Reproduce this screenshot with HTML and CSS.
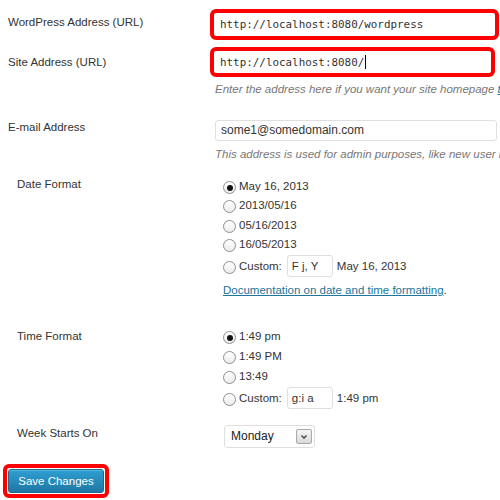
FILE: index.html
```html
<!DOCTYPE html>
<html>
<head>
<meta charset="utf-8">
<link rel="stylesheet" href="styles.css">
</head>
<body>
<div class="form">
  <div class="row row-wp">
    <div class="label label-wp">WordPress Address (URL)</div>
    <div class="field">
      <div class="mark mark-wp"><div class="code">http://localhost:8080/wordpress</div></div>
    </div>
  </div>

  <div class="row row-site">
    <div class="label label-site">Site Address (URL)</div>
    <div class="field">
      <div class="mark mark-site"><div class="code">http://localhost:8080/<span class="caret"></span></div></div>
      <p class="desc desc-site">Enter the address here if you want your site homepage <a class="desc-link">to be different from the directory</a> you installed WordPress.</p>
    </div>
  </div>

  <div class="row row-email">
    <div class="label label-email">E-mail Address</div>
    <div class="field">
      <div class="text-input email">some1@somedomain.com</div>
      <p class="desc desc-email">This address is used for admin purposes, like new user registration.</p>
    </div>
  </div>

  <div class="row row-date">
    <div class="label label-sub label-date">Date Format</div>
    <div class="field">
      <div class="options">
        <label class="opt"><span class="radio checked"></span>May 16, 2013</label>
        <label class="opt"><span class="radio"></span>2013/05/16</label>
        <label class="opt"><span class="radio"></span>05/16/2013</label>
        <label class="opt"><span class="radio"></span>16/05/2013</label>
        <label class="opt opt-custom"><span class="radio"></span>Custom:<span class="small-input">F j, Y</span><span class="example">May 16, 2013</span></label>
      </div>
      <p class="doc"><a class="doc-link">Documentation on date and time formatting</a>.</p>
    </div>
  </div>

  <div class="row row-time">
    <div class="label label-sub label-time">Time Format</div>
    <div class="field">
      <div class="options">
        <label class="opt opt-t"><span class="radio checked"></span>1:49 pm</label>
        <label class="opt opt-t"><span class="radio"></span>1:49 PM</label>
        <label class="opt opt-t"><span class="radio"></span>13:49</label>
        <label class="opt opt-custom opt-custom-t"><span class="radio"></span>Custom:<span class="small-input">g:i a</span><span class="example">1:49 pm</span></label>
      </div>
    </div>
  </div>

  <div class="row row-week">
    <div class="label label-sub label-week">Week Starts On</div>
    <div class="field">
      <div class="select">
        <span class="select-text">Monday</span>
        <span class="select-arrow"><svg width="14" height="12" viewBox="0 0 14 12"><polyline points="4.5,4.5 7,7 9.5,4.5" fill="none" stroke="#555" stroke-width="1.6"/></svg></span>
      </div>
    </div>
  </div>

  <div class="submit">
    <div class="mark-btn"><div class="button">Save Changes</div></div>
  </div>
</div>
</body>
</html>
```

FILE: styles.css
```css
html, body {
  margin: 0;
  padding: 0;
  background: #fff;
  overflow: hidden;
}

body {
  font-family: "Liberation Sans", Arial, sans-serif;
  font-size: 11.5px;
  line-height: 15px;
  color: #333;
}

.form {
  display: flex;
  flex-direction: column;
  padding-top: 9px;
  width: 500px;
}

.row {
  display: flex;
  align-items: flex-start;
}

.label {
  width: 210px;
  flex: none;
  box-sizing: border-box;
  padding-left: 8px;
  color: #333;
  white-space: nowrap;
}

.label-sub { padding-left: 17px; }

.label-wp { padding-top: 6px; }
.label-site { padding-top: 8px; }
.label-email { padding-top: 0; }
.label-date { padding-top: 0; }
.label-time { padding-top: 2px; }
.label-week { padding-top: 1px; }

.field {
  flex: 1;
  min-width: 0;
  display: flex;
  flex-direction: column;
  align-items: flex-start;
}

.row-site { margin-top: 7px; }
.row-email { margin-top: 23px; }
.row-date { margin-top: 15px; }
.row-time { margin-top: 29px; }
.row-week { margin-top: 16px; }

/* red highlight frames */
.mark {
  box-sizing: border-box;
  border: 4px solid #f00;
  border-radius: 6px;
  background: #fff;
  display: flex;
  align-items: center;
  padding-left: 6px;
}

.mark-wp { width: 289px; height: 31px; }
.mark-site { width: 285px; height: 30px; }

.code {
  font-family: "DejaVu Sans Mono", Consolas, monospace;
  font-size: 10.9px;
  color: #333;
  white-space: nowrap;
  display: flex;
  align-items: center;
}

.caret {
  display: inline-block;
  width: 1px;
  height: 14px;
  background: #000;
  margin-left: 1px;
}

.desc {
  margin: 0;
  margin-left: 5px;
  font-style: italic;
  color: #777;
  white-space: nowrap;
}

.desc-site { margin-top: 5px; }
.desc-email { margin-top: 6px; }

.desc-link {
  color: #21759b;
  text-decoration: underline;
}

.text-input {
  box-sizing: border-box;
  border: 1px solid #dfdfdf;
  border-radius: 3px;
  background: #fff;
  color: #333;
  display: flex;
  align-items: center;
  padding-left: 5px;
}

.email {
  margin-left: 5px;
  width: 282px;
  height: 21px;
  font-size: 12px;
}

.options {
  display: flex;
  flex-direction: column;
  margin-left: 13px;
}

.opt {
  display: flex;
  align-items: center;
  height: 19.3px;
  white-space: nowrap;
  color: #333;
}

.opt-t { height: 19.6px; }

.radio {
  box-sizing: border-box;
  width: 13px;
  height: 13px;
  border: 1px solid #8e8e8e;
  border-radius: 50%;
  background: linear-gradient(#fff, #ececec);
  margin-right: 3px;
  margin-top: 2px;
  flex: none;
  display: flex;
  align-items: center;
  justify-content: center;
}

.radio.checked::after {
  content: "";
  width: 6px;
  height: 6px;
  border-radius: 50%;
  background: #111;
}

.opt-custom {
  height: 22px;
  margin-top: 1px;
}

.opt-custom-t {
  margin-top: 1.5px;
}

.small-input {
  box-sizing: border-box;
  width: 46px;
  height: 22px;
  border: 1px solid #dfdfdf;
  border-radius: 3px;
  margin-left: 5px;
  padding-left: 4px;
  display: flex;
  align-items: center;
  color: #333;
}

.example {
  margin-left: 4px;
}

.doc {
  margin: 6px 0 0 13px;
  white-space: nowrap;
}

.doc-link {
  color: #21759b;
  text-decoration: underline;
}

.select {
  box-sizing: border-box;
  margin-left: 14px;
  width: 91px;
  height: 23px;
  border: 1px solid #dfdfdf;
  border-radius: 3px;
  background: #fff;
  display: flex;
  align-items: center;
  justify-content: space-between;
  padding: 0 2px 0 6px;
}

.select-text {
  color: #222;
  font-size: 12px;
}

.select-arrow {
  box-sizing: border-box;
  width: 16px;
  height: 15px;
  border: 1px solid #a9a9a9;
  border-radius: 2px;
  background: linear-gradient(#f6f6f6, #d9d9d9);
  display: flex;
  align-items: center;
  justify-content: center;
}

.select-arrow svg {
  display: block;
}

.submit {
  margin-top: 16px;
  padding-left: 3px;
  display: flex;
}

.mark-btn {
  box-sizing: border-box;
  width: 106px;
  height: 34px;
  border: 4px solid #f00;
  border-radius: 6px;
  padding: 1px;
  background: #fff;
}

.button {
  box-sizing: border-box;
  width: 100%;
  height: 100%;
  background: linear-gradient(#2e9fd2, #1f77a4);
  border: 1px solid #1e6a8d;
  border-radius: 3px;
  box-shadow: inset 0 1px 0 rgba(120, 200, 230, 0.5);
  color: #fff;
  display: flex;
  align-items: center;
  justify-content: center;
  font-size: 11.5px;
}
```
